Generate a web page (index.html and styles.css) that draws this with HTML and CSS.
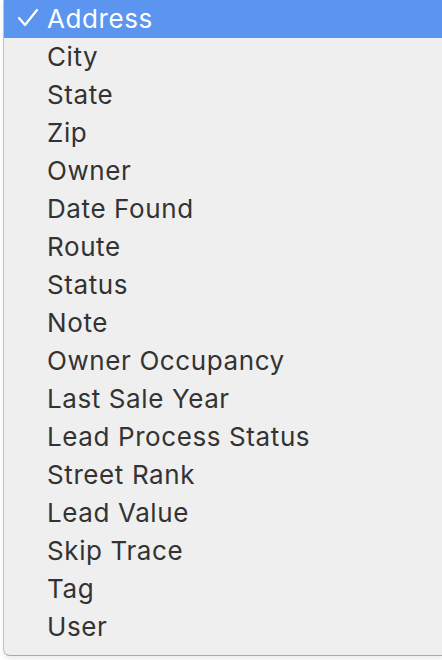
FILE: index.html
```html
<!DOCTYPE html>
<html lang="en">
<head>
  <meta charset="UTF-8">
  <meta name="viewport" content="width=device-width, initial-scale=1.0">
  <title>Column Picker</title>
  <link rel="stylesheet" href="styles.css">
</head>
<body>

  <!-- Dropdown menu -->
  <ul class="menu">
    <li class="selected">
      <svg class="check" width="22" height="20" viewBox="0 0 22 20">
        <polyline points="2,10 8,17 20,2" fill="none" stroke="white" stroke-width="2.2" stroke-linecap="round" stroke-linejoin="round"/>
      </svg>
      Address
    </li>
    <li>City</li>
    <li>State</li>
    <li>Zip</li>
    <li>Owner</li>
    <li>Date Found</li>
    <li>Route</li>
    <li>Status</li>
    <li>Note</li>
    <li>Owner Occupancy</li>
    <li>Last Sale Year</li>
    <li>Lead Process Status</li>
    <li>Street Rank</li>
    <li>Lead Value</li>
    <li>Skip Trace</li>
    <li>Tag</li>
    <li>User</li>
  </ul>

</body>
</html>
```

FILE: styles.css
```css
/* General Reset */
* {
  margin: 0;
  padding: 0;
  box-sizing: border-box;
}

body {
  font-family: 'Inter', 'Noto Sans', sans-serif;
  background: #fff;
  color: #333;
  height: 660px;
  overflow: hidden;
}

/* Menu */
.menu {
  list-style: none;
  margin-left: 3px;
  padding-bottom: 9px;
  background-color: #efefef;
  border-left: 1px solid #c4c4c4;
  border-bottom: 1px solid #a8a8a8;
  border-bottom-left-radius: 7px;
  box-shadow: 0 3px 4px rgba(0, 0, 0, 0.08);
}

.menu li {
  height: 38px;
  line-height: 38px;
  padding-left: 43px;
  font-size: 26px;
  letter-spacing: 0.6px;
  color: #333;
  position: relative;
}

.menu li.selected {
  background-color: #5b95ef;
  color: white;
}

.menu li .check {
  position: absolute;
  left: 13px;
  top: 8px;
}
```
